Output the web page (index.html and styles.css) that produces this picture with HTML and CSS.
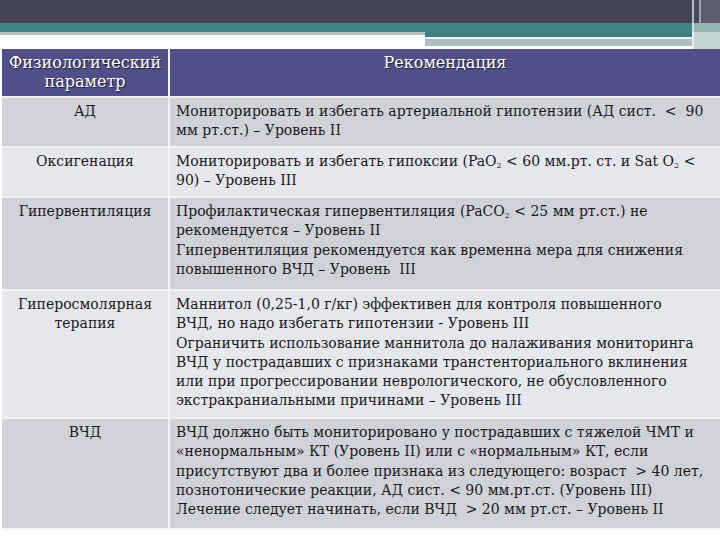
FILE: index.html
```html
<!DOCTYPE html>
<html lang="ru">
<head>
<meta charset="utf-8">
<link rel="stylesheet" href="styles.css">
</head>
<body>
<div class="deco">
  <div class="dark"><div class="dark-fill"></div><div class="dark-edge"></div></div>
  <div class="teal"><div class="teal-fill"></div><div class="teal-edge"></div></div>
  <div class="lower">
    <div class="lower-left"></div>
    <div class="lower-right"><div class="lr-teal"></div><div class="lr-white"></div><div class="lr-gray"></div></div>
    <div class="lower-edge"></div>
  </div>
</div>
<table class="grid">
  <tr class="head">
    <th class="c1">Физиологический<br>параметр</th>
    <th class="c2">Рекомендация</th>
  </tr>
  <tr class="r-dark h48">
    <td class="c1">АД</td>
    <td class="c2">Мониторировать и избегать артериальной гипотензии (АД сист. &nbsp;&lt; &nbsp;90<br>мм рт.ст.) – Уровень II</td>
  </tr>
  <tr class="r-light h48">
    <td class="c1">Оксигенация</td>
    <td class="c2">Мониторировать и избегать гипоксии (PaO<sub>2</sub> &lt; 60 мм.рт. ст. и Sat O<sub>2</sub> &lt;<br>90) – Уровень III</td>
  </tr>
  <tr class="r-dark h92">
    <td class="c1">Гипервентиляция</td>
    <td class="c2">Профилактическая гипервентиляция (PaCO<sub>2</sub> &lt; 25 мм рт.ст.) не<br>рекомендуется – Уровень II<br>Гипервентиляция рекомендуется как временна мера для снижения<br>повышенного ВЧД – Уровень &nbsp;III</td>
  </tr>
  <tr class="r-light h127">
    <td class="c1">Гиперосмолярная<br>терапия</td>
    <td class="c2">Маннитол (0,25-1,0 г/кг) эффективен для контроля повышенного<br>ВЧД, но надо избегать гипотензии - Уровень III<br>Ограничить использование маннитола до налаживания мониторинга<br>ВЧД у пострадавших с признаками транстенториального вклинения<br>или при прогрессировании неврологического, не обусловленного<br>экстракраниальными причинами – Уровень III</td>
  </tr>
  <tr class="r-dark h110">
    <td class="c1">ВЧД</td>
    <td class="c2">ВЧД должно быть мониторировано у пострадавших с тяжелой ЧМТ и<br>«ненормальным» КТ (Уровень II) или с «нормальным» КТ, если<br>присутствуют два и более признака из следующего: возраст &nbsp;&gt; 40 лет,<br>познотонические реакции, АД сист. &lt; 90 мм.рт.ст. (Уровень III)<br>Лечение следует начинать, если ВЧД &nbsp;&gt; 20 мм рт.ст. – Уровень II</td>
  </tr>
</table>
</body>
</html>
```
FILE: styles.css
```css
html, body {
  margin: 0;
  padding: 0;
  background: #ffffff;
}
body {
  width: 720px;
  height: 540px;
  overflow: hidden;
  font-family: "DejaVu Serif", "Liberation Serif", serif;
  color: #1a1a1a;
}
.deco {
  display: flex;
  flex-direction: column;
  height: 49px;
}
.dark {
  display: flex;
  height: 23px;
}
.dark-fill {
  flex: 1;
  background: #424553;
  border-bottom: 1px solid #4a3f4f;
}
.dark-edge {
  width: 26px;
  background: #5c5e6c;
  border-left: 2px solid #b9b9c6;
  box-shadow: inset 5px 0 0 #474957, inset 7px 0 0 #a0a0ae;
}
.teal {
  display: flex;
  height: 9px;
}
.teal-fill {
  flex: 1;
  background: #3f8587;
}
.teal-edge {
  width: 26px;
  background: #93b3b5;
  border-left: 2px solid #cfdcdd;
}
.lower {
  display: flex;
  height: 17px;
}
.lower-left {
  width: 425px;
  background: linear-gradient(#b2c2c3 0, #b2c2c3 3px, #ffffff 3px);
}
.lower-right {
  flex: 1;
  display: flex;
  flex-direction: column;
}
.lr-teal {
  height: 5px;
  background: #3f7e81;
}
.lr-white {
  height: 2px;
  background: #eef4f4;
}
.lr-gray {
  height: 7px;
  background: #aebfc0;
}
.lower-edge {
  width: 26px;
  background: #c6d4d5;
  border-left: 2px solid #e6eeee;
}
.grid {
  border-collapse: collapse;
  width: 718px;
  margin-left: 2px;
  table-layout: fixed;
}
.grid th, .grid td {
  vertical-align: top;
  padding: 0;
  border: 2px solid #f2f2f6;
  border-top: 0;
  border-left: 0;
}
.grid .c1 {
  width: 166px;
  text-align: center;
}
.grid .c2 {
  text-align: left;
  padding-left: 6px;
  border-right: 0;
}
.head th {
  background: #504f88;
  color: #ffffff;
  font-weight: normal;
  font-size: 16px;
  line-height: 19px;
  padding-top: 4px;
  height: 43px;
  text-shadow: 1px 1px 1px #1f1f33;
  white-space: nowrap;
}
.head .c2 {
  text-align: center;
  padding-left: 0;
}
.grid td {
  font-size: 14px;
  line-height: 19.3px;
  padding-top: 4px;
  white-space: nowrap;
}
.r-dark td { background: #d1d1d9; }
.r-light td { background: #e6e6ed; }
.h48 td { height: 44px; }
.h92 td { height: 87px; }
.h127 td { height: 122px; }
.h110 td { height: 105px; }
sub {
  font-size: 8px;
  line-height: 0;
  vertical-align: -2px;
}
```
